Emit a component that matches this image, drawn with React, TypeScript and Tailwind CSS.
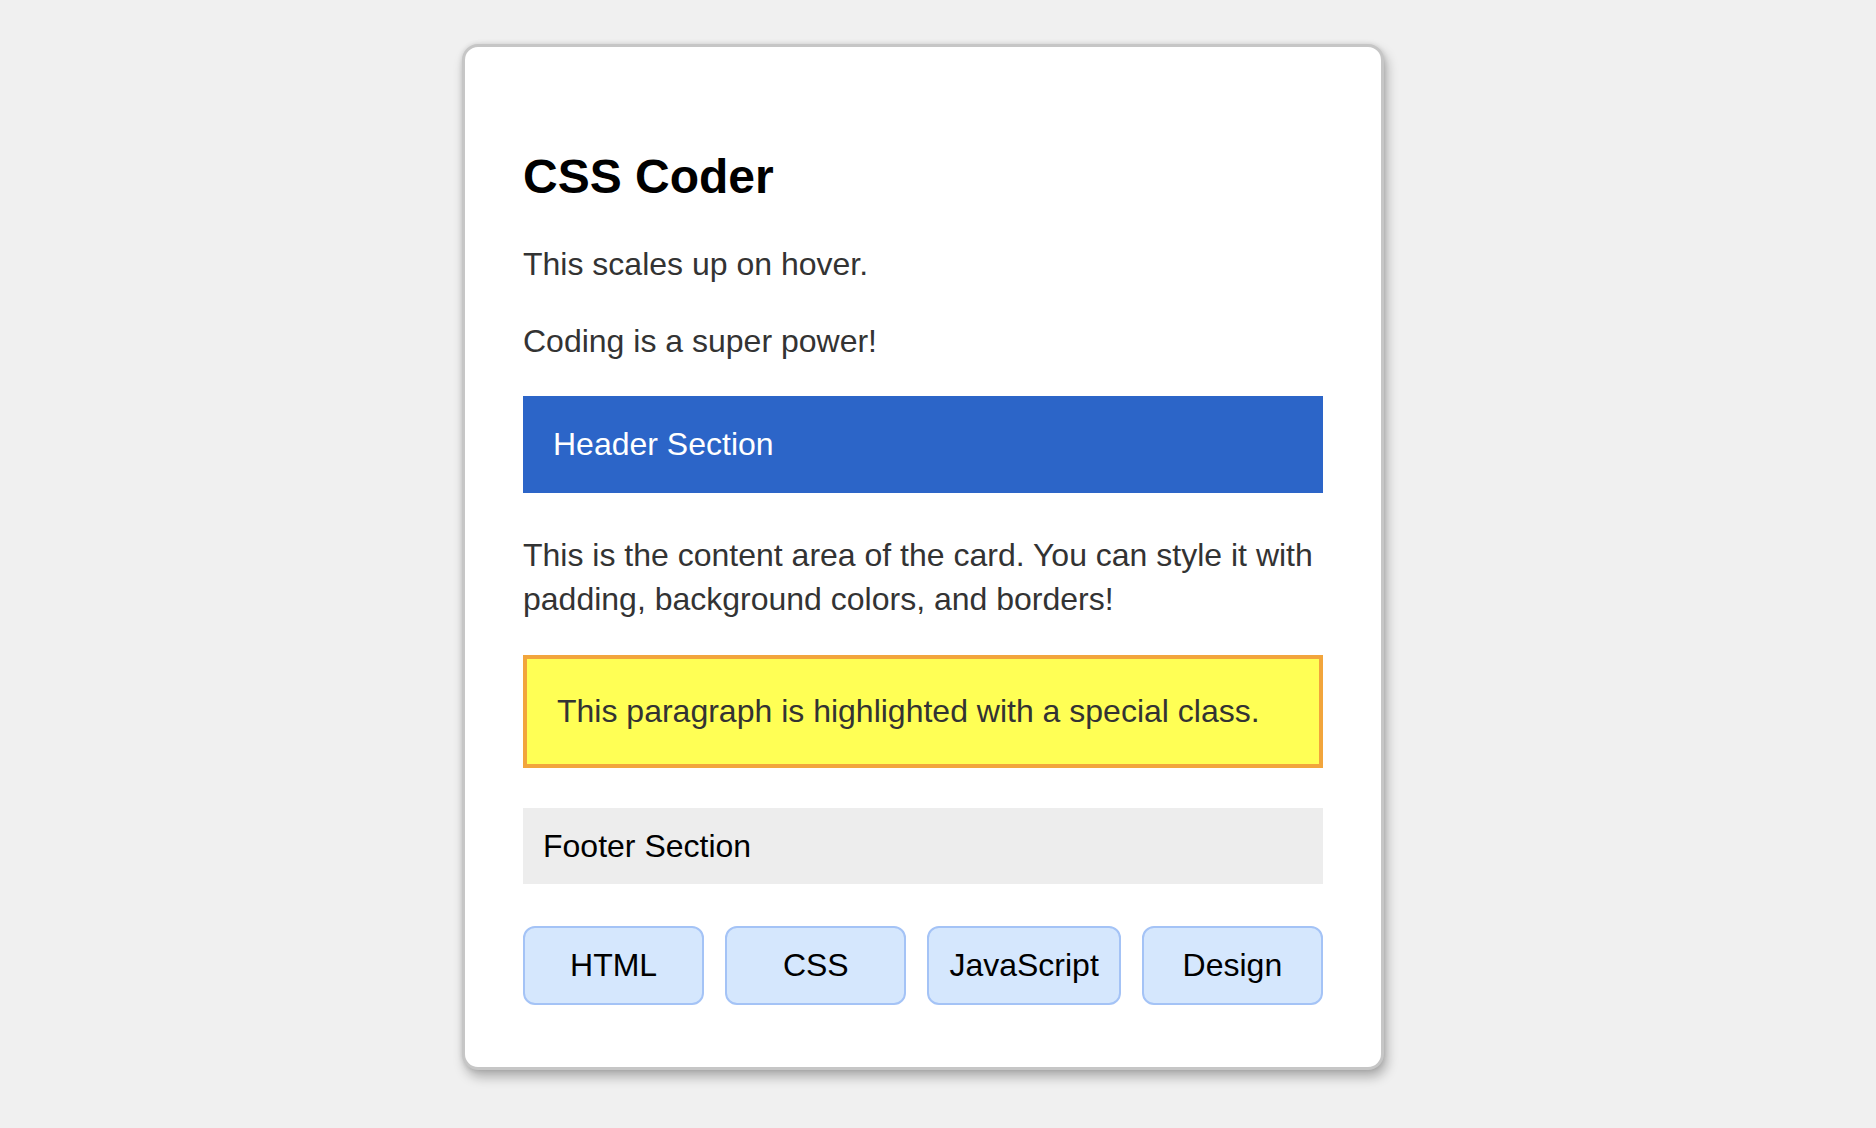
const tags = ["HTML", "CSS", "JavaScript", "Design"]

export default function App() {
  return (
    <div
      className="min-h-screen bg-[#f0f0f0] pt-[44px] pb-[40px] pr-[30px] flex justify-center"
      style={{ fontFamily: '"Liberation Sans", Arial, Helvetica, sans-serif' }}
    >
      <div className="w-[922px] self-start bg-white border-[3px] border-[#c6c6c6] rounded-[16px] shadow-[0_0_5px_rgba(0,0,0,0.12),3px_7px_12px_rgba(0,0,0,0.28)] px-[58px] pt-[102px] pb-[62px] flex flex-col">
        {/* Title */}
        <h2 className="text-[48px] leading-[55px] font-bold text-black">CSS Coder</h2>

        <p className="mt-[42px] text-[32px] leading-[37px] text-[#333333]">This scales up on hover.</p>
        <p className="mt-[40px] text-[32px] leading-[37px] text-[#333333]">Coding is a super power!</p>

        {/* Header block */}
        <div className="mt-[36px] bg-[#2c65c8] px-[30px] py-[30px] text-[32px] leading-[37px] text-white">
          Header Section
        </div>

        <p className="mt-[40px] text-[32px] leading-[44px] text-[#333333]">
          This is the content area of the card. You can style it with padding, background colors, and borders!
        </p>

        {/* Highlighted paragraph */}
        <p className="mt-[34px] bg-[#ffff55] border-4 border-[#f2a53c] px-[30px] py-[34px] text-[32px] leading-[37px] text-[#333333]">
          This paragraph is highlighted with a special class.
        </p>

        {/* Footer block */}
        <div className="mt-[40px] bg-[#ededed] px-[20px] pt-[20px] pb-[19px] text-[32px] leading-[37px] text-black">
          Footer Section
        </div>

        {/* Tags */}
        <div className="mt-[42px] flex gap-[21px]">
          {tags.map((t) => (
            <div
              key={t}
              className="flex-1 text-center bg-[#d5e7fd] border-2 border-[#a4c3f6] rounded-[12px] px-[20px] py-[19px] text-[32px] leading-[37px] text-black whitespace-nowrap"
            >
              {t}
            </div>
          ))}
        </div>
      </div>
    </div>
  )
}
